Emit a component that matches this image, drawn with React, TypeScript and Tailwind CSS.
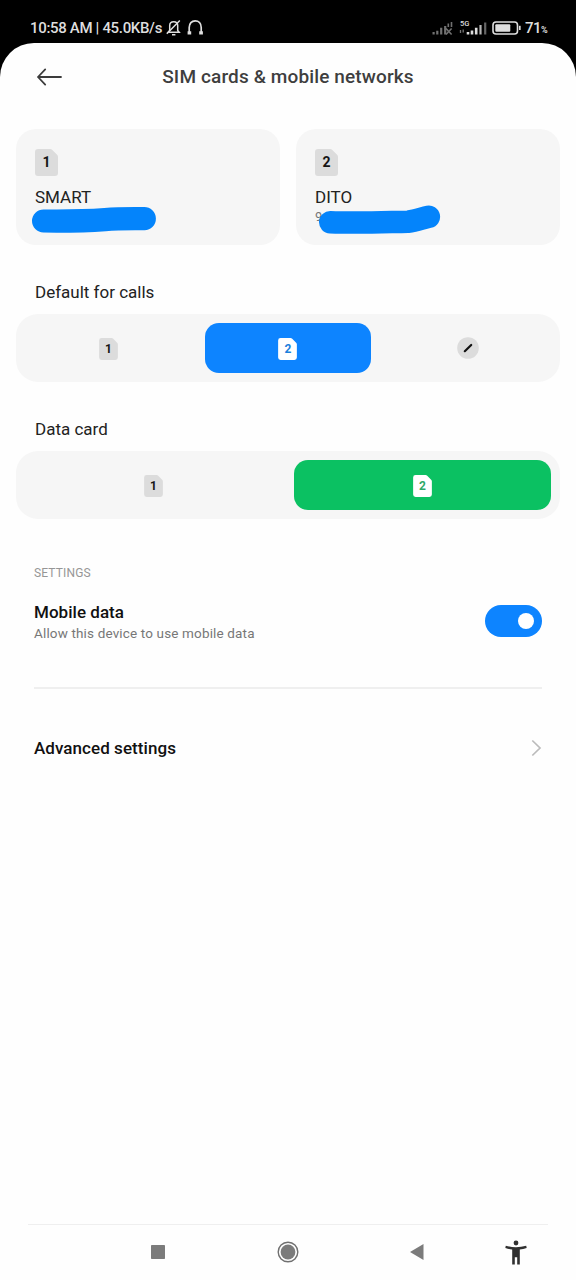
import React from "react";

type Tone = "muted" | "blue" | "green";

const tones: Record<Tone, { fill: string; text: string }> = {
  muted: { fill: "fill-[#dcdcdc]", text: "text-[#151515]" },
  blue: { fill: "fill-white", text: "text-[#1b80dc]" },
  green: { fill: "fill-white", text: "text-[#2fa968]" },
};

function SimChip({ n, tone = "muted", large = false }: { n: number; tone?: Tone; large?: boolean }) {
  return (
    <span className={`grid place-items-center ${large ? "h-[27px] w-[23px]" : "h-[22px] w-[19px]"}`}>
      <svg viewBox="0 0 23 27" className={`col-start-1 row-start-1 h-full w-full ${tones[tone].fill}`}>
        <path d="M3 0H15.2Q16.4 0 17.3 .9L22.1 5.7Q23 6.6 23 7.8V24Q23 27 20 27H3Q0 27 0 24V3Q0 0 3 0Z" />
      </svg>
      <span
        className={`col-start-1 row-start-1 font-bold leading-none ${large ? "-mt-px text-[14px]" : "text-[12px]"} ${tones[tone].text}`}
      >
        {n}
      </span>
    </span>
  );
}

function StatusBar() {
  return (
    <div className="flex h-[43px] shrink-0 items-center pt-[13px] pl-[30px] text-[#dedede]">
      <span className="w-[136px] whitespace-nowrap text-[15px] font-medium leading-[18px] tracking-[-0.33px]">
        10:58 AM | 45.0KB/s
      </span>
      <svg width="38" height="18" viewBox="0 0 38 18" fill="none" stroke="currentColor" strokeWidth="1.5">
        <path d="M2.2 13.2H13.2L11.7 11.4V6.5C11.7 4.2 10 2.7 7.7 2.7S3.7 4.2 3.7 6.5V11.4Z" />
        <path d="M6 15.7H9.4M.8 14.7L13.8 1.5" />
        <path d="M23.2 15V8.5C23.2 4.3 25.7 1.8 29.2 1.8S35.2 4.3 35.2 8.5V15" strokeWidth="1.7" />
        <path d="M21.6 13.8H25.2M33.2 13.8H36.9" strokeWidth="3.2" />
      </svg>
      <div className="ml-auto flex items-center pr-[29px]">
        <svg width="22" height="18" viewBox="0 0 22 18" className="text-[#707070]" stroke="currentColor" fill="none">
          <path d="M1.6 15.5V13M5.3 15.5V11.7M9.2 15.5V8.8M13.2 15.5V7" strokeWidth="2.2" />
          <path d="M14 9.5L19.6 15.5M19.6 9.5L14 15.5" strokeWidth="1.6" />
          <path d="M16.3 4.5V8M19.5 3V8" strokeWidth="1.6" />
        </svg>
        <div className="ml-[5px] grid h-[18px] w-[29px]">
          <span className="col-start-1 row-start-1 pl-[1px] text-[7.5px] font-medium leading-[9px]">5G</span>
          <svg width="29" height="18" viewBox="0 0 29 18" stroke="currentColor" fill="none" className="col-start-1 row-start-1">
            <path d="M1.5 11V14M4.2 10.5V13.5" stroke="#777" strokeWidth="1.3" />
            <path d="M9 15.5V13M13 15.5V11.5M17.2 15.5V8.8" strokeWidth="2.6" />
            <path d="M21.5 15.5V6" stroke="#b5b5b5" strokeWidth="2.2" />
            <path d="M26.2 15.5V3.5" stroke="#666" strokeWidth="2.2" />
          </svg>
        </div>
        <svg width="29" height="14" viewBox="0 0 29 14" className="ml-[4px]">
          <rect x="1" y="1" width="24.5" height="12" rx="3" fill="none" stroke="currentColor" strokeWidth="1.6" />
          <rect x="3.3" y="3.2" width="15" height="7.6" rx="1" fill="currentColor" />
          <path d="M27.8 4.8V9" stroke="currentColor" strokeWidth="1.7" />
        </svg>
        <span className="ml-[4px] text-[15px] font-medium leading-[18px] tracking-[-0.5px]">71</span>
        <span className="pt-[4px] text-[9px] font-bold leading-none tracking-[-0.6px]">%</span>
      </div>
    </div>
  );
}

function SimCard({ n, name, children }: { n: number; name: string; children: React.ReactNode }) {
  return (
    <div className="relative h-[116px] rounded-[20px] bg-[#f6f6f6] pl-[19px] pt-[20px]">
      <SimChip n={n} large />
      <div className="mt-[10px] text-[17px] leading-[22px] text-[#222]">{name}</div>
      {children}
    </div>
  );
}

export default function App() {
  return (
    <div className="flex h-[1280px] w-[576px] flex-col overflow-hidden bg-black font-['Roboto',sans-serif]">
      <StatusBar />
      <main className="flex flex-1 flex-col rounded-t-[34px] bg-[#fefefe]">
        <header className="grid h-[86px] grid-cols-[1fr_auto_1fr] pt-[20px]">
          <svg width="27" height="20" viewBox="0 0 27 20" className="ml-[36px] mt-[4px]" fill="none" stroke="#3c3c3c" strokeWidth="1.8" strokeLinecap="round" strokeLinejoin="round">
            <path d="M9.2 2.4L2 10L9.2 17.6M2 10H25" />
          </svg>
          <h1 className="mt-px h-[26px] whitespace-nowrap text-[19px] font-medium leading-[26px] tracking-[0.13px] text-[#3e3e3e]">
            SIM cards &amp; mobile networks
          </h1>
        </header>

        <section className="grid grid-cols-2 gap-4 px-4">
          <SimCard n={1} name="SMART">
            <svg width="126" height="28" viewBox="0 0 126 28" className="absolute left-[15px] top-[77px]" fill="none" stroke="#0484fb" strokeWidth="23.2" strokeLinecap="round" strokeLinejoin="round">
              <path d="M12.6 15C38 15.3 57 14.8 74 13.6C89 12.6 102 12.8 113.3 12.6" />
            </svg>
          </SimCard>
          <SimCard n={2} name="DITO">
            <div className="text-[13px] leading-[18px] text-[#777]">9</div>
            <svg width="124" height="32" viewBox="0 0 124 32" className="absolute left-[22px] top-[75px]" fill="none" stroke="#0484fb" strokeWidth="22.6" strokeLinecap="round" strokeLinejoin="round">
              <path d="M12.3 18.2C40 19.2 64 18.2 90 17.7C98 16.8 104 14.3 110.8 12.8" />
            </svg>
          </SimCard>
        </section>

        <section className="px-4 pt-[36px]">
          <h2 className="pl-[19px] text-[17px] leading-[22px] text-[#222]">Default for calls</h2>
          <div className="mt-[11px] grid h-[68px] grid-cols-3 gap-[13px] rounded-[22px] bg-[#f6f6f6] p-[9px]">
            <div className="grid place-items-center pt-px"><SimChip n={1} /></div>
            <div className="grid place-items-center rounded-[14px] bg-[#0d84ff] pt-px"><SimChip n={2} tone="blue" /></div>
            <div className="grid place-items-center">
              <svg width="22" height="22" viewBox="0 0 22 22">
                <circle cx="11" cy="11" r="10.8" fill="#dcdcdc" />
                <path d="M7.8 14.2L14.2 8" stroke="#111" strokeWidth="2.2" strokeLinecap="round" />
              </svg>
            </div>
          </div>
        </section>

        <section className="px-4 pt-[36px]">
          <h2 className="pl-[19px] text-[17px] leading-[22px] text-[#222]">Data card</h2>
          <div className="mt-[11px] grid h-[68px] grid-cols-2 gap-[12px] rounded-[22px] bg-[#f6f6f6] p-[9px]">
            <div className="grid place-items-center pt-px"><SimChip n={1} /></div>
            <div className="grid place-items-center rounded-[14px] bg-[#0bc162] pt-px"><SimChip n={2} tone="green" /></div>
          </div>
        </section>

        <section className="px-[34px] pt-[46px]">
          <div className="text-[12px] leading-[16px] tracking-[0.15px] text-[#969696]">SETTINGS</div>
          <div className="mt-[20px] flex items-start justify-between">
            <div>
              <div className="text-[17px] font-medium leading-[22px] tracking-[0.03px] text-[#111]">Mobile data</div>
              <div className="text-[13.5px] leading-[20px] tracking-[0.15px] text-[#777]">Allow this device to use mobile data</div>
            </div>
            <div className="mt-[4px] flex h-[32px] w-[57px] items-center justify-end rounded-full bg-[#0d84ff] pr-[8px]">
              <div className="h-[16px] w-[16px] rounded-full bg-white" />
            </div>
          </div>
          <div className="mt-[44px] h-[2px] bg-[#efefef]" />
          <div className="mt-[48px] flex items-center justify-between">
            <div className="text-[17px] font-medium leading-[22px] tracking-[0.06px] text-[#111]">Advanced settings</div>
            <svg width="11" height="18" viewBox="0 0 11 18" fill="none" stroke="#bbb" strokeWidth="1.7">
              <path d="M1.3 1.5L9 9L1.3 16.5" />
            </svg>
          </div>
        </section>

        <nav className="mx-[28px] mt-auto h-[56px] border-t border-[#efefef]">
          <div className="grid h-[54px] grid-cols-[260px_129px_99px_1fr] items-center">
            <svg width="14" height="14" className="ml-[123px]" fill="#7b7b7b"><rect width="14" height="14" rx=".7" /></svg>
            <svg width="22" height="22" viewBox="0 0 22 22" className="-ml-[11px]">
              <circle cx="11" cy="11" r="9.8" fill="none" stroke="#707070" strokeWidth="1.4" />
              <circle cx="11" cy="11" r="7.4" fill="#7b7b7b" />
            </svg>
            <svg width="14" height="16" viewBox="0 0 14 16" className="-ml-[7px]" fill="#7b7b7b"><path d="M0 8L13.5 0V16Z" /></svg>
            <svg width="22" height="25" viewBox="0 0 22 25" className="-ml-[11px]" fill="#303030">
              <circle cx="11" cy="3" r="2.4" />
              <path d="M.8 5.8Q11 8.6 21.2 5.8L21.7 8Q18 9.2 14.8 9.4V24.5H12.2V17.3H9.8V24.5H7.2V9.4Q4 9.2.3 8Z" />
            </svg>
          </div>
        </nav>
      </main>
    </div>
  );
}
